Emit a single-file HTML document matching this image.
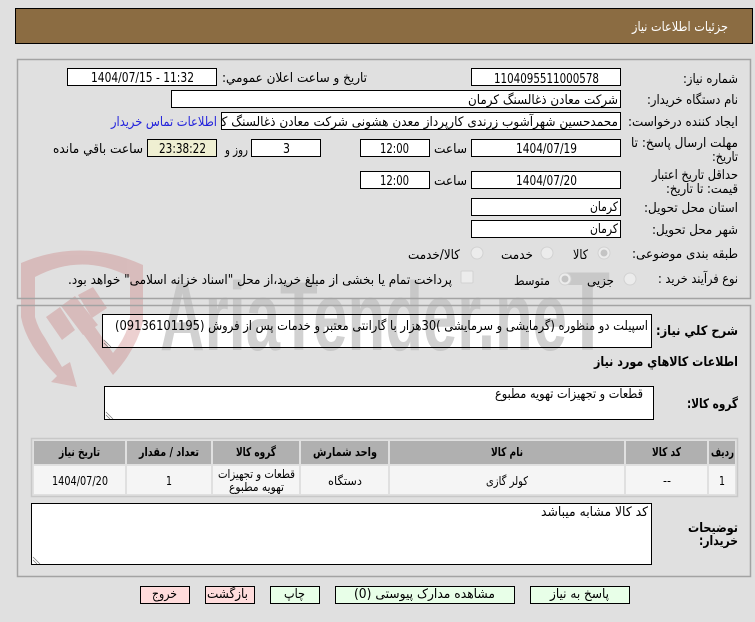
<!DOCTYPE html>
<html lang="fa">
<head>
<meta charset="utf-8">
<title>جزئیات اطلاعات نیاز</title>
<style>
html,body{margin:0;padding:0;background:#e0e0e0;width:755px;height:622px;overflow:hidden}
svg{display:block;position:absolute;left:0;top:0}
text{font-family:"DejaVu Sans","Liberation Sans",sans-serif;font-size:13px;fill:#000}
.r{direction:rtl}
.b{font-weight:bold}
.s{font-size:12px}
.panel{fill:none;stroke:#a3a3a3;stroke-width:1.5}
.radio{fill:#ececec;stroke:#d2d2d2;stroke-width:1}
.dot{fill:#c4c4c4}
.h{fill:#b0b0b0}
.c{fill:#f5f5f5}
.grip{stroke:#777;stroke-width:.7}
.wm{font-family:"Liberation Sans",sans-serif;font-weight:bold;fill:#bebebe}
</style>
</head>
<body>
<svg width="755" height="622" viewBox="0 0 755 622" xmlns="http://www.w3.org/2000/svg">
<defs>
<clipPath id="cp"><rect x="222" y="112" width="398" height="18"/></clipPath>
<g id="bx">
<rect x="471.5" y="68.5" width="149" height="17"/>
<rect x="67.5" y="68.5" width="149" height="17"/>
<rect x="171.5" y="90.5" width="449" height="17"/>
<rect x="221.5" y="112.5" width="399" height="17"/>
<rect x="471.5" y="139.5" width="149" height="17"/>
<rect x="360.5" y="139.5" width="69" height="17"/>
<rect x="251.5" y="139.5" width="69" height="17"/>
<rect x="471.5" y="171.5" width="149" height="17"/>
<rect x="360.5" y="171.5" width="69" height="17"/>
<rect x="471.5" y="198.5" width="149" height="17"/>
<rect x="471.5" y="220.5" width="149" height="17"/>
<rect x="102.5" y="314.5" width="549" height="33"/>
<rect x="104.5" y="386.5" width="549" height="33"/>
<rect x="31.5" y="503.5" width="620" height="61"/>
</g>
</defs>

<!-- box fills -->
<use href="#bx" fill="#fff" stroke="none"/>

<!-- watermark -->
<g opacity=".35" fill="#c87878">
<path d="M21 263Q82 237 143 265L143 322Q136 350 113 375L75 323L90 320L113 353Q128 335 130 317L130 277Q82 252 35 277L35 317Q38 328 45 338L62 367L70 362L77 387L51 382L57 376Q26 345 21 317Z"/>
<path d="M46 317L60 307L75 330L62 340Z"/>
<path d="M61 306L75 296L98 325L83 335Z"/>
<path d="M78 295L93 287L107 308L92 318Z"/>
</g>
<g opacity=".7">
<text class="wm" x="160" y="350" textLength="407" lengthAdjust="spacingAndGlyphs" style="font-size:97px">AriaTender.ne</text>
<text class="wm" x="565" y="350" textLength="45" lengthAdjust="spacingAndGlyphs" style="font-size:112px">T</text>
</g>

<!-- box borders -->
<use href="#bx" fill="none" stroke="#000"/>

<!-- header -->
<rect x="15.5" y="8.5" width="737" height="35" fill="#8b6c42" stroke="#000"/>
<text class="r" x="728" y="31" textLength="96" lengthAdjust="spacingAndGlyphs" style="fill:#fff">جزئیات اطلاعات نیاز</text>

<!-- panels -->
<rect class="panel" x="17.5" y="59.5" width="733" height="239"/>
<rect class="panel" x="17.5" y="305.5" width="733" height="271"/>

<rect x="147.5" y="139.5" width="69" height="17" fill="#efefd2" stroke="#000"/>

<!-- labels -->
<text class="r" x="738" y="83" textLength="55" lengthAdjust="spacingAndGlyphs">شماره نیاز:</text>
<text class="r" x="738" y="104" textLength="91" lengthAdjust="spacingAndGlyphs">نام دستگاه خریدار:</text>
<text class="r" x="738" y="126" textLength="110" lengthAdjust="spacingAndGlyphs">ایجاد کننده درخواست:</text>
<text class="r" x="738" y="147" textLength="107" lengthAdjust="spacingAndGlyphs">مهلت ارسال پاسخ: تا</text>
<text class="r" x="738" y="161" textLength="26" lengthAdjust="spacingAndGlyphs">تاریخ:</text>
<text class="r" x="738" y="179" textLength="86" lengthAdjust="spacingAndGlyphs">حداقل تاریخ اعتبار</text>
<text class="r" x="738" y="193" textLength="72" lengthAdjust="spacingAndGlyphs">قیمت: تا تاریخ:</text>
<text class="r" x="738" y="212" textLength="94" lengthAdjust="spacingAndGlyphs">استان محل تحویل:</text>
<text class="r" x="738" y="234" textLength="86" lengthAdjust="spacingAndGlyphs">شهر محل تحویل:</text>
<text class="r" x="738" y="258" textLength="106" lengthAdjust="spacingAndGlyphs">طبقه بندی موضوعی:</text>
<text class="r" x="738" y="283" textLength="80" lengthAdjust="spacingAndGlyphs">نوع فرآیند خرید :</text>
<text class="r" x="367" y="82" textLength="145" lengthAdjust="spacingAndGlyphs">تاریخ و ساعت اعلان عمومي:</text>

<!-- values -->
<text x="494" y="83" textLength="105" lengthAdjust="spacingAndGlyphs">1104095511000578</text>
<text x="91" y="82" textLength="103" lengthAdjust="spacingAndGlyphs">1404/07/15 - 11:32</text>
<text class="r" x="618" y="104" textLength="150" lengthAdjust="spacingAndGlyphs">شرکت معادن ذغالسنگ کرمان</text>
<g clip-path="url(#cp)"><text class="r" x="618" y="126" textLength="422" lengthAdjust="spacingAndGlyphs">محمدحسین شهرآشوب زرندی کارپرداز معدن هشونی شرکت معادن ذغالسنگ کرمان</text></g>
<text class="r" x="217" y="126" textLength="106" lengthAdjust="spacingAndGlyphs" style="fill:#2323dc">اطلاعات تماس خریدار</text>
<text x="516" y="153" textLength="61" lengthAdjust="spacingAndGlyphs">1404/07/19</text>
<text class="r" x="467" y="153" textLength="33" lengthAdjust="spacingAndGlyphs">ساعت</text>
<text x="380" y="153" textLength="29" lengthAdjust="spacingAndGlyphs">12:00</text>
<text x="283" y="153" textLength="7" lengthAdjust="spacingAndGlyphs">3</text>
<text class="r" x="248" y="154" textLength="23" lengthAdjust="spacingAndGlyphs">روز و</text>
<text x="159" y="153" textLength="47" lengthAdjust="spacingAndGlyphs">23:38:22</text>
<text class="r" x="143" y="153" textLength="90" lengthAdjust="spacingAndGlyphs">ساعت باقي مانده</text>
<text x="516" y="185" textLength="61" lengthAdjust="spacingAndGlyphs">1404/07/20</text>
<text class="r" x="467" y="185" textLength="33" lengthAdjust="spacingAndGlyphs">ساعت</text>
<text x="380" y="185" textLength="29" lengthAdjust="spacingAndGlyphs">12:00</text>
<text class="r" x="618" y="211" textLength="28" lengthAdjust="spacingAndGlyphs">کرمان</text>
<text class="r" x="618" y="233" textLength="28" lengthAdjust="spacingAndGlyphs">کرمان</text>

<!-- radios -->
<circle class="radio" cx="604" cy="253" r="6"/><circle class="dot" cx="604" cy="253" r="3.5"/>
<circle class="radio" cx="547" cy="253" r="6"/>
<circle class="radio" cx="477" cy="253" r="6"/>
<circle class="radio" cx="630" cy="279" r="6"/>
<circle class="radio" cx="565" cy="279" r="6"/><circle class="dot" cx="565" cy="279" r="3.5"/>
<rect x="461" y="271" width="12" height="12" rx="1" fill="#ececec" stroke="#d2d2d2"/>
<text class="r" x="588" y="259" textLength="15" lengthAdjust="spacingAndGlyphs">کالا</text>
<text class="r" x="533" y="259" textLength="32" lengthAdjust="spacingAndGlyphs">خدمت</text>
<text class="r" x="460" y="259" textLength="52" lengthAdjust="spacingAndGlyphs">کالا/خدمت</text>
<text class="r" x="614" y="285" textLength="27" lengthAdjust="spacingAndGlyphs">جزیی</text>
<text class="r" x="550" y="285" textLength="36" lengthAdjust="spacingAndGlyphs">متوسط</text>
<text class="r" x="452" y="284" textLength="384" lengthAdjust="spacingAndGlyphs">پرداخت تمام یا بخشی از مبلغ خرید،از محل "اسناد خزانه اسلامی" خواهد بود.</text>

<!-- section 2 -->
<text class="r b" x="738" y="335" textLength="82" lengthAdjust="spacingAndGlyphs">شرح کلي نیاز:</text>
<text class="r" x="648" y="330" textLength="533" lengthAdjust="spacingAndGlyphs">اسپیلت دو منظوره (گرمایشی و سرمایشی )30هزار با گارانتی معتبر و خدمات پس از فروش (09136101195)</text>
<path class="grip" d="M104 340L111 347M104 343L108 347"/>
<text class="r b" x="738" y="366" textLength="144" lengthAdjust="spacingAndGlyphs">اطلاعات کالاهاي مورد نیاز</text>
<text class="r b" x="738" y="408" textLength="51" lengthAdjust="spacingAndGlyphs">گروه کالا:</text>
<text class="r" x="643" y="398" textLength="148" lengthAdjust="spacingAndGlyphs">قطعات و تجهیزات تهویه مطبوع</text>
<path class="grip" d="M106 412L113 419M106 415L110 419"/>

<!-- table -->
<rect x="31.5" y="438.5" width="706" height="58" fill="none" stroke="#c8c8c8" stroke-width="1.5"/>
<rect class="h" x="34" y="441" width="91" height="23"/><rect class="c" x="34" y="466" width="91" height="28"/>
<rect class="h" x="127" y="441" width="84" height="23"/><rect class="c" x="127" y="466" width="84" height="28"/>
<rect class="h" x="213" y="441" width="86" height="23"/><rect class="c" x="213" y="466" width="86" height="28"/>
<rect class="h" x="301" y="441" width="87" height="23"/><rect class="c" x="301" y="466" width="87" height="28"/>
<rect class="h" x="390" y="441" width="234" height="23"/><rect class="c" x="390" y="466" width="234" height="28"/>
<rect class="h" x="626" y="441" width="81" height="23"/><rect class="c" x="626" y="466" width="81" height="28"/>
<rect class="h" x="709" y="441" width="26" height="23"/><rect class="c" x="709" y="466" width="26" height="28"/>
<text class="r b s" x="100" y="456" textLength="41" lengthAdjust="spacingAndGlyphs">تاریخ نیاز</text>
<text class="r b s" x="199" y="456" textLength="60" lengthAdjust="spacingAndGlyphs">تعداد / مقدار</text>
<text class="r b s" x="276" y="456" textLength="40" lengthAdjust="spacingAndGlyphs">گروه کالا</text>
<text class="r b s" x="377" y="456" textLength="64" lengthAdjust="spacingAndGlyphs">واحد شمارش</text>
<text class="r b s" x="523" y="456" textLength="32" lengthAdjust="spacingAndGlyphs">نام کالا</text>
<text class="r b s" x="681" y="456" textLength="29" lengthAdjust="spacingAndGlyphs">کد کالا</text>
<text class="r b s" x="734" y="456" textLength="23" lengthAdjust="spacingAndGlyphs">ردیف</text>
<text class="s" x="52" y="485" textLength="56" lengthAdjust="spacingAndGlyphs">1404/07/20</text>
<text class="s" x="166" y="485" textLength="6" lengthAdjust="spacingAndGlyphs">1</text>
<text class="r s" x="295" y="478" textLength="77" lengthAdjust="spacingAndGlyphs">قطعات و تجهیزات</text>
<text class="r s" x="284" y="491" textLength="55" lengthAdjust="spacingAndGlyphs">تهویه مطبوع</text>
<text class="r s" x="362" y="485" textLength="34" lengthAdjust="spacingAndGlyphs">دستگاه</text>
<text class="r s" x="528" y="485" textLength="42" lengthAdjust="spacingAndGlyphs">کولر گازی</text>
<text class="s" x="663" y="485" textLength="8" lengthAdjust="spacingAndGlyphs">--</text>
<text class="s" x="719" y="485" textLength="6" lengthAdjust="spacingAndGlyphs">1</text>

<!-- description -->
<text class="r" x="648" y="516" textLength="107" lengthAdjust="spacingAndGlyphs">کد کالا مشابه میباشد</text>
<path class="grip" d="M33 557L40 564M33 560L37 564"/>
<text class="r b" x="738" y="532" textLength="50" lengthAdjust="spacingAndGlyphs">توضیحات</text>
<text class="r b" x="738" y="545" textLength="39" lengthAdjust="spacingAndGlyphs">خریدار:</text>

<!-- buttons -->
<rect x="140.5" y="586.5" width="49" height="17" fill="#ffdcdc" stroke="#000"/>
<rect x="205.5" y="586.5" width="49" height="17" fill="#ffdcdc" stroke="#000"/>
<rect x="270.5" y="586.5" width="49" height="17" fill="#e8ffe8" stroke="#000"/>
<rect x="335.5" y="586.5" width="179" height="17" fill="#e8ffe8" stroke="#000"/>
<rect x="530.5" y="586.5" width="99" height="17" fill="#e8ffe8" stroke="#000"/>
<text class="r" x="177" y="598" textLength="25" lengthAdjust="spacingAndGlyphs">خروج</text>
<text class="r" x="248" y="598" textLength="41" lengthAdjust="spacingAndGlyphs">بازگشت</text>
<text class="r" x="305" y="598" textLength="21" lengthAdjust="spacingAndGlyphs">چاپ</text>
<text class="r" x="495" y="598" textLength="141" lengthAdjust="spacingAndGlyphs">مشاهده مدارک پیوستی (0)</text>
<text class="r" x="609" y="598" textLength="59" lengthAdjust="spacingAndGlyphs">پاسخ به نیاز</text>
</svg>
</body>
</html>
